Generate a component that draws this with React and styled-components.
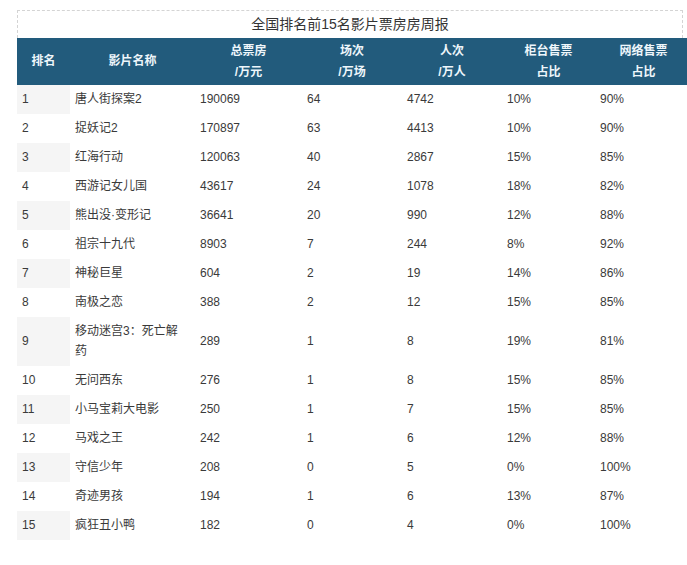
import React from "react";
import styled, { createGlobalStyle } from "styled-components";

const GlobalStyle = createGlobalStyle`
  html, body {
    margin: 0;
    padding: 0;
    background: #ffffff;
    overflow: hidden;
  }
  body {
    font-family: "Liberation Sans", "Noto Sans CJK SC", sans-serif;
    color: #333333;
  }
`;

const Page = styled.div`
  padding: 10px 0 0 17px;
  width: 675px;
`;

const Title = styled.div`
  width: 664px;
  height: 27px;
  border: 1px dashed #d4d4d4;
  border-bottom: none;
  font-size: 14px;
  line-height: 27px;
  text-align: center;
  color: #333333;
`;

const Table = styled.table`
  width: 675px;
  table-layout: fixed;
  border-collapse: collapse;
  font-size: 12px;
`;

const HeadCell = styled.th`
  height: 47px;
  padding: 0 4px;
  background: #225b7c;
  color: #eef6fb;
  font-weight: bold;
  font-size: 12px;
  line-height: 21px;
  text-align: center;
  vertical-align: middle;
`;

const Row = styled.tr`
  background: #ffffff;
`;

const Cell = styled.td`
  padding: 4px ${(p) => (p.$wide ? "10px" : "5px")} 5px 5px;
  line-height: 20px;
  vertical-align: middle;
  text-align: left;
  color: #3a3a3a;
  background: ${(p) => (p.$shade ? "#f5f5f5" : "transparent")};
`;

const columns = [
  { w: 53, label: ["排名"] },
  { w: 125, label: ["影片名称"] },
  { w: 107, label: ["总票房", "/万元"] },
  { w: 100, label: ["场次", "/万场"] },
  { w: 100, label: ["人次", "/万人"] },
  { w: 93, label: ["柜台售票", "占比"] },
  { w: 97, label: ["网络售票", "占比"] },
];

const films = [
  ["唐人街探案2", "190069", "64", "4742", "10%", "90%"],
  ["捉妖记2", "170897", "63", "4413", "10%", "90%"],
  ["红海行动", "120063", "40", "2867", "15%", "85%"],
  ["西游记女儿国", "43617", "24", "1078", "18%", "82%"],
  ["熊出没·变形记", "36641", "20", "990", "12%", "88%"],
  ["祖宗十九代", "8903", "7", "244", "8%", "92%"],
  ["神秘巨星", "604", "2", "19", "14%", "86%"],
  ["南极之恋", "388", "2", "12", "15%", "85%"],
  ["移动迷宫3：死亡解药", "289", "1", "8", "19%", "81%"],
  ["无问西东", "276", "1", "8", "15%", "85%"],
  ["小马宝莉大电影", "250", "1", "7", "15%", "85%"],
  ["马戏之王", "242", "1", "6", "12%", "88%"],
  ["守信少年", "208", "0", "5", "0%", "100%"],
  ["奇迹男孩", "194", "1", "6", "13%", "87%"],
  ["疯狂丑小鸭", "182", "0", "4", "0%", "100%"],
];

export default function App() {
  return (
    <>
      <GlobalStyle />
      <Page>
        <Title>全国排名前15名影片票房房周报</Title>
        <Table>
          <colgroup>
            {columns.map((c, i) => (
              <col key={i} style={{ width: c.w }} />
            ))}
          </colgroup>
          <thead>
            <tr>
              {columns.map((c, i) => (
                <HeadCell key={i}>
                  {c.label.map((l, j) => (
                    <div key={j}>{l}</div>
                  ))}
                </HeadCell>
              ))}
            </tr>
          </thead>
          <tbody>
            {films.map((f, i) => (
              <Row key={i}>
                <Cell $shade={i % 2 === 0}>{i + 1}</Cell>
                <Cell $wide>{f[0]}</Cell>
                {f.slice(1).map((v, j) => (
                  <Cell key={j}>{v}</Cell>
                ))}
              </Row>
            ))}
          </tbody>
        </Table>
      </Page>
    </>
  );
}
